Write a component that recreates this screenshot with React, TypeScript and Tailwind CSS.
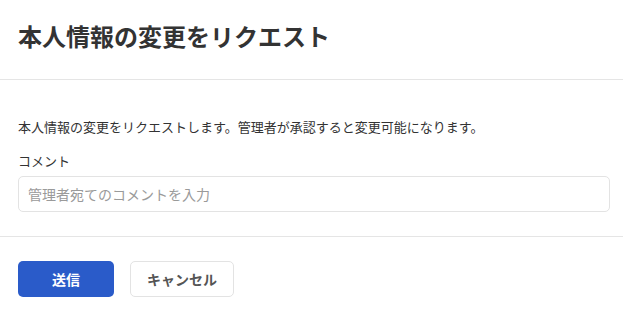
import React from "react";

export default function App() {
  return (
    <div
      className="w-[623px] h-[317px] bg-white text-[#333]"
      style={{ fontFamily: '"Noto Sans CJK JP", "Noto Sans", sans-serif' }}
    >
      <div className="h-[80px] border-b border-[#e5e5e5] px-[18px] flex items-center">
        <h1 className="text-[24px] font-bold leading-none text-[#333] -mt-[8px]">
          本人情報の変更をリクエスト
        </h1>
      </div>
      <div className="px-[18px] pt-[37px] pb-[24px] border-b border-[#e5e5e5]">
        <p className="text-[13px] leading-[20px] text-[#333]">
          本人情報の変更をリクエストします。管理者が承認すると変更可能になります。
        </p>
        <label className="block mt-[14px] text-[13px] leading-[20px] text-[#333]">
          コメント
        </label>
        <input
          type="text"
          placeholder="管理者宛てのコメントを入力"
          className="mt-[5px] w-[592px] h-[36px] rounded-[5px] border border-[#e3e3e3] px-[9px] text-[14px] placeholder:text-[#9a9a9a] outline-none"
          style={{ fontFamily: '"Noto Sans CJK JP", "Noto Sans", sans-serif' }}
        />
      </div>
      <div className="px-[18px] pt-[24px] flex gap-[16px]">
        <button
          className="w-[96px] h-[36px] rounded-[5px] bg-[#2a5bc9] text-white text-[14px] font-bold"
          style={{ fontFamily: '"Noto Sans CJK JP", "Noto Sans", sans-serif' }}
        >
          送信
        </button>
        <button
          className="w-[104px] h-[36px] rounded-[5px] bg-white border border-[#e3e3e3] text-[#555] text-[14px] font-bold"
          style={{ fontFamily: '"Noto Sans CJK JP", "Noto Sans", sans-serif' }}
        >
          キャンセル
        </button>
      </div>
    </div>
  );
}
